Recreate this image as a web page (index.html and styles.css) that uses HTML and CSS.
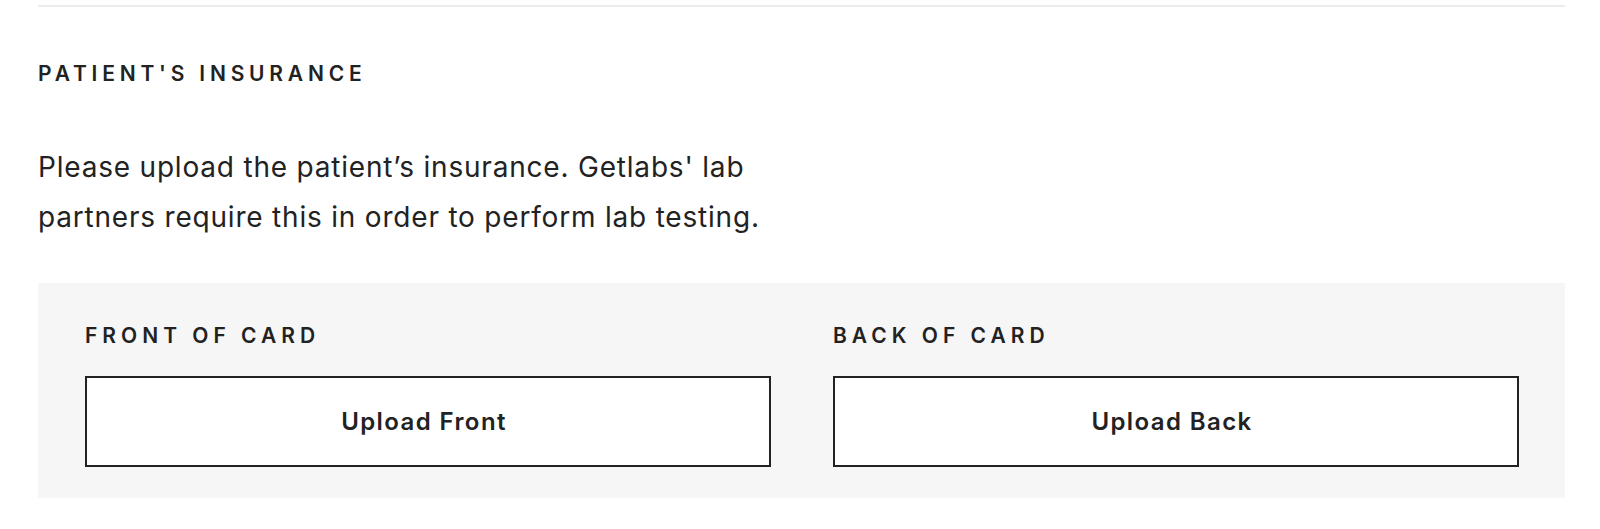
FILE: index.html
```html
<!DOCTYPE html>
<html lang="en">
<head>
<meta charset="utf-8">
<title>Patient's Insurance</title>
<link rel="stylesheet" href="styles.css">
</head>
<body>
<div class="page">
  <div class="rule"></div>
  <h2 class="section-title">PATIENT'S INSURANCE</h2>
  <p class="intro">Please upload the patient’s insurance. Getlabs' lab partners require this in order to perform lab testing.</p>
  <div class="card-panel">
    <div class="card-col">
      <div class="card-label">FRONT OF CARD</div>
      <button class="upload-btn" type="button">Upload Front</button>
    </div>
    <div class="card-col">
      <div class="card-label">BACK OF CARD</div>
      <button class="upload-btn" type="button">Upload Back</button>
    </div>
  </div>
</div>
</body>
</html>
```

FILE: styles.css
```css
* { box-sizing: border-box; }
html, body { margin: 0; padding: 0; background: #fff; }
body {
  font-family: Inter, "Noto Sans", sans-serif;
  color: #222;
}
.page {
  margin-left: 38px;
  width: 1527px;
  padding-top: 5px;
}
.rule {
  height: 2px;
  background: #ececec;
}
.section-title {
  margin: 55px 0 0;
  font-size: 21px;
  line-height: 24px;
  font-weight: 600;
  letter-spacing: 4.8px;
  color: #222;
}
.intro {
  margin: 56px 0 0;
  max-width: 760px;
  font-size: 28px;
  line-height: 50px;
  font-weight: 400;
  letter-spacing: 0.8px;
  color: #222;
}
.card-panel {
  margin-top: 41px;
  background: #f6f6f6;
  padding: 41px 46px 31px 47px;
  display: flex;
  gap: 62px;
}
.card-col {
  flex: 1 1 0;
  display: flex;
  flex-direction: column;
}
.card-label {
  font-size: 21px;
  line-height: 24px;
  font-weight: 600;
  letter-spacing: 5px;
  color: #222;
}
.upload-btn {
  margin-top: 28px;
  height: 91px;
  width: 100%;
  padding: 0 8px 0 0;
  background: #fff;
  border: 2px solid #222;
  border-radius: 0;
  font-family: Inter, "Noto Sans", sans-serif;
  font-size: 24px;
  font-weight: 600;
  letter-spacing: 1.4px;
  color: #222;
  cursor: pointer;
}
```
